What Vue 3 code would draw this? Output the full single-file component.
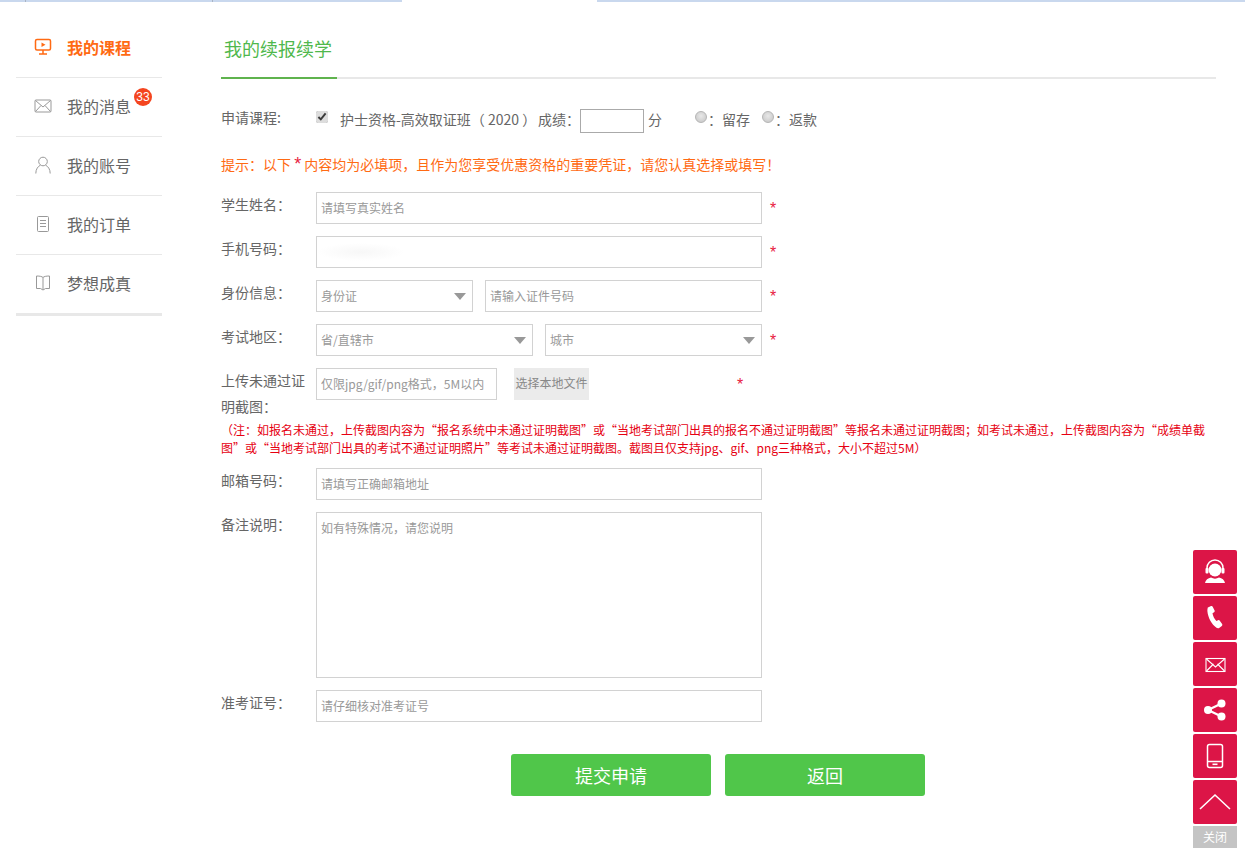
<script setup>
const menu = [
  { key: 'course', label: '我的课程', active: true },
  { key: 'msg', label: '我的消息', badge: 33 },
  { key: 'user', label: '我的账号' },
  { key: 'order', label: '我的订单' },
  { key: 'book', label: '梦想成真' }
]
const floats = ['service', 'phone', 'mail', 'share', 'mobile', 'up']
</script>

<template>
  <div class="page">
    <div class="topstrip">
      <div class="strip-seg seg-a"></div>
      <div class="strip-seg seg-a2"></div>
      <div class="strip-seg seg-a3"></div>
      <div class="strip-gap"></div>
      <div class="strip-seg seg-b"></div>
    </div>
    <div class="layout">
      <aside class="side">
        <div v-for="m in menu" :key="m.key" class="side-item" :class="{ active: m.active }">
          <svg class="side-icon" viewBox="0 0 18 18" fill="none" stroke="currentColor" stroke-width="1">
            <template v-if="m.key === 'course'">
              <rect x="1.5" y="1.5" width="15" height="10.5" rx="1.5" stroke-width="1.5" />
              <path d="M7.5 4.5l4 2.2-4 2.2z" fill="currentColor" stroke="none" />
              <path d="M9 12v4M5 16h8" stroke-width="1.5" />
            </template>
            <template v-else-if="m.key === 'msg'">
              <rect x="1" y="3" width="16" height="12" rx="1" />
              <path d="M1.500 3.500L9 10l7.500-6.500M1.500 14.500L7 8.500M16.500 14.500L11 8.500" />
            </template>
            <template v-else-if="m.key === 'user'">
              <circle cx="9" cy="5.500" r="4.300" />
              <path d="M1.800 17.500c0-4.500 2.200-7 4.400-8.200M16.200 17.500c0-4.500-2.200-7-4.400-8.200" />
            </template>
            <template v-else-if="m.key === 'order'">
              <rect x="3.500" y="1.500" width="11" height="15" rx="1" />
              <path d="M6 5.500h6M6 8.500h6M6 11.500h6" />
            </template>
            <template v-else>
              <path d="M9 3.500C8 2.500 6 2 2.500 2v12.500H6.500L9 16l2.500-1.500h4V2C12 2 10 2.500 9 3.500zM9 3.500V15.500" />
            </template>
          </svg>
          <span class="side-label">{{ m.label }}</span>
          <span v-if="m.badge" class="badge">{{ m.badge }}</span>
        </div>
      </aside>

      <main class="main">
        <div class="tabbar"><h2 class="tab">我的续报续学</h2></div>

        <div class="course-row">
          <span class="course-label">申请课程:</span>
          <input class="check" type="checkbox" checked />
          <span class="course-name">护士资格-高效取证班（ 2020 ）</span>
          <span class="score-label">成绩：</span>
          <input class="score" type="text" />
          <span class="fen">分</span>
          <input class="radio radio-first" type="radio" name="a" />
          <span class="radio-text">：留存</span>
          <input class="radio" type="radio" name="a" />
          <span class="radio-text">：返款</span>
        </div>

        <p class="hint">提示：以下 <span class="hint-star">*</span> 内容均为必填项，且作为您享受优惠资格的重要凭证，请您认真选择或填写！</p>

        <div class="row">
          <label class="lbl">学生姓名：</label>
          <input class="field wide" placeholder="请填写真实姓名" />
          <span class="star">*</span>
        </div>
        <div class="row">
          <label class="lbl">手机号码：</label>
          <input class="field wide phone" />
          <span class="star">*</span>
        </div>
        <div class="row">
          <label class="lbl">身份信息：</label>
          <div class="field select id-type"><span>身份证</span><i class="caret"></i></div>
          <input class="field id-no" placeholder="请输入证件号码" />
          <span class="star">*</span>
        </div>
        <div class="row">
          <label class="lbl">考试地区：</label>
          <div class="field select region"><span>省/直辖市</span><i class="caret"></i></div>
          <div class="field select city"><span>城市</span><i class="caret"></i></div>
          <span class="star">*</span>
        </div>
        <div class="row upload-row">
          <label class="lbl upload-lbl">上传未通过证明截图：</label>
          <input class="field upload" placeholder="仅限jpg/gif/png格式，5M以内" />
          <span class="pick">选择本地文件</span>
          <span class="star upload-star">*</span>
        </div>
        <p class="note">（注：如报名未通过，上传截图内容为“报名系统中未通过证明截图”或“当地考试部门出具的报名不通过证明截图”等报名未通过证明截图；如考试未通过，上传截图内容为“成绩单截图”或“当地考试部门出具的考试不通过证明照片”等考试未通过证明截图。截图且仅支持jpg、gif、png三种格式，大小不超过5M）</p>
        <div class="row">
          <label class="lbl">邮箱号码：</label>
          <input class="field wide" placeholder="请填写正确邮箱地址" />
        </div>
        <div class="row">
          <label class="lbl">备注说明：</label>
          <textarea class="field wide area" placeholder="如有特殊情况，请您说明"></textarea>
        </div>
        <div class="row">
          <label class="lbl">准考证号：</label>
          <input class="field wide" placeholder="请仔细核对准考证号" />
        </div>
        <div class="actions">
          <button class="btn" type="button">提交申请</button>
          <button class="btn" type="button">返回</button>
        </div>
      </main>
    </div>

    <div class="float-bar">
      <div v-for="f in floats" :key="f" class="float-btn">
        <svg viewBox="0 0 44 44" width="44" height="44" fill="#fff">
          <template v-if="f === 'service'">
            <circle cx="22" cy="20" r="6.500" />
            <path d="M14 21v-3a8 8 0 0 1 16 0v3" fill="none" stroke="#fff" stroke-width="1.500" />
            <rect x="12.500" y="18" width="3" height="5.500" rx="1" />
            <rect x="28.500" y="18" width="3" height="5.500" rx="1" />
            <path d="M12 33c.5-3 3-5 6-5.500 2.500 1.500 5.500 1.500 8 0 3 .5 5.500 2.500 6 5.500z" />
          </template>
          <path v-else-if="f === 'phone'" d="M15 11.500l3-1.500c.8-.3 1.400 0 1.700.7l1.900 3.800c.3.700.1 1.300-.5 1.700l-1.600 1c.4 2.800 1.900 5.700 3.900 7.800l1.700-.8c.7-.3 1.300-.1 1.700.5l2.300 3.400c.4.700.3 1.300-.3 1.800l-2.300 1.800c-1 .7-2.100.7-3 .1-4.800-3.300-8.500-10-9.100-16.500-.1-1.500.2-3.800.9-4.700z" />
          <g v-else-if="f === 'mail'" fill="none" stroke="#fff" stroke-width="1.100">
            <rect x="13" y="16.500" width="19" height="13" />
            <path d="M13.500 17L22.500 25l9-8M13.500 29l7-7M31.500 29l-7-7" />
          </g>
          <g v-else-if="f === 'share'">
            <circle cx="28.500" cy="15.500" r="4" />
            <circle cx="15" cy="22" r="4" />
            <circle cx="28.500" cy="28.500" r="4" />
            <path d="M15 22l13.500-6.500M15 22l13.500 6.500" stroke="#fff" stroke-width="2.200" fill="none" />
          </g>
          <g v-else-if="f === 'mobile'">
            <rect x="14.500" y="10.500" width="15" height="23" rx="2" fill="none" stroke="#fff" stroke-width="1.500" />
            <path d="M14.500 27.500h15" stroke="#fff" stroke-width="1.500" />
            <rect x="19.500" y="29.500" width="5" height="1.600" />
          </g>
          <path v-else d="M7 29L22 15l15 14" fill="none" stroke="#fff" stroke-width="1.600" />
        </svg>
      </div>
      <div class="float-close">关闭</div>
    </div>
  </div>
</template>

<style scoped>
.page {
  position: relative;
  width: 1245px;
  height: 852px;
  overflow: hidden;
  background: #fff;
  font-family: "Noto Sans CJK SC", "Liberation Sans", sans-serif;
  font-size: 14px;
  color: #666;
}
.topstrip { display: flex; height: 2px; }
.strip-seg { background: #c9d8ee; box-sizing: border-box; }
.seg-a { width: 26px; border-right: 1px solid #a9b4c4; }
.seg-a2 { width: 187px; border-right: 1px solid #a9b4c4; }
.seg-a3 { width: 189px; }
.strip-gap { width: 195px; }
.seg-b { flex: 1; }
.layout { display: flex; padding-left: 16px; }
.side { width: 146px; height: 314px; padding-top: 16px; border-bottom: 3px solid #e8e8e8; box-sizing: border-box; }
.side-item {
  position: relative;
  display: flex;
  align-items: center;
  height: 59px;
  padding: 0 0 2px 18px;
  border-bottom: 1px solid #e8e8e8;
  box-sizing: border-box;
  font-size: 16px;
  color: #666;
}
.side-item:first-child { height: 60px; }
.side-item:last-child { border-bottom: 0; padding-bottom: 3px; }
.side-item.active { color: #ff6a13; font-weight: 700; }
.side-icon { width: 18px; height: 18px; color: #999; margin-right: 15px; flex: none; }
.active .side-icon { color: #ff6a13; }
.side-label { line-height: 20px; }
.badge {
  position: absolute;
  left: 118px;
  top: 10px;
  width: 18px;
  height: 18px;
  border-radius: 50%;
  background: #f4451f;
  color: #fff;
  font-size: 12px;
  font-family: "Liberation Sans", sans-serif;
  line-height: 18px;
  text-align: center;
}
.main { width: 995px; margin-left: 59px; }
.tabbar { height: 75px; border-bottom: 2px solid #e8e8e8; }
.tab {
  display: block;
  box-sizing: content-box;
  width: 116px;
  height: 75px;
  margin: 0;
  border-bottom: 2px solid #5fb34e;
  font-size: 18px;
  font-weight: 400;
  color: #4fb84c;
  line-height: 92px;
  text-indent: 3px;
}
.course-row { display: flex; align-items: center; height: 32px; margin-top: 26px; color: #666; }
.course-label { width: 95px; margin-top: -8px; }
.check {
  width: 12px;
  height: 12px;
  margin: -8px 12px 0 0;
  accent-color: #ddd;
}
.course-name { width: 198px; white-space: pre; margin-top: -4px; }
.score-label { width: 42px; white-space: nowrap; margin-top: -4px; }
.score { width: 64px; height: 24px; padding: 0; border: 1px solid #aaa; box-sizing: border-box; outline: 0; }
.fen { margin-left: 4px; width: 33px; margin-top: -4px; }
.radio {
  appearance: none;
  width: 12px;
  height: 12px;
  margin: -8px 1px 0 0;
  border: 1px solid #b5b5b5;
  border-radius: 50%;
  background: radial-gradient(circle at 50% 40%, #e8e8e8, #c4c4c4);
  box-sizing: border-box;
}
.radio-first { margin-left: 14px; }
.radio-text { width: 54px; white-space: nowrap; margin-top: -4px; }
.hint { margin: 17px 0 0; height: 20px; line-height: 20px; color: #ff6a13; }
.hint-star { color: #e8223e; font-size: 18px; font-family: "Liberation Sans", sans-serif; }
.row { display: flex; gap: 12px; margin-top: 12px; align-items: flex-start; }
.hint + .row { margin-top: 18px; }
.lbl { width: 83px; flex: none; line-height: 24px; color: #666; }
.field {
  height: 32px;
  border: 1px solid #d2d2d2;
  box-sizing: border-box;
  padding: 0 4px 2px;
  font: inherit;
  font-size: 12px;
  color: #999;
  background: #fff;
  outline: 0;
  flex: none;
}
.field::placeholder { color: #999; opacity: 1; }
.wide { width: 446px; }
.phone { background: radial-gradient(ellipse 44px 9px at 44px 15px, #f7f7f7, #fff); }
.select { display: flex; align-items: center; justify-content: space-between; padding-right: 6px; }
.caret { width: 0; height: 0; border: 6px solid transparent; border-top: 7px solid #999; border-bottom: 0; margin-top: 2px; }
.id-type { width: 157px; }
.id-no { width: 277px; }
.region { width: 217px; }
.city { width: 217px; }
.star {
  color: #e8223e;
  font-family: "Liberation Sans", sans-serif;
  font-size: 16px;
  line-height: 30px;
  margin: 2px 0 0 -4px;
  width: 10px;
}
.upload-row { height: 32px; }
.upload-lbl { width: 84px; margin: -1px -1px 0 0; height: 56px; line-height: 26px; }
.upload { width: 181px; }
.pick { width: 75px; height: 32px; line-height: 30px; background: #ebebeb; text-align: center; font-size: 12px; color: #888; margin-left: 5px; margin-right: 145px; flex: none; }
.upload-star { margin-left: -9px; }
.note {
  margin: 21px 0 0;
  width: 990px;
  font-size: 12px;
  line-height: 18px;
  color: #e60012;
}
.note + .row { margin-top: 11px; }
.area { height: 166px; padding-top: 6px; resize: none; display: block; }
.actions { display: flex; justify-content: flex-start; gap: 14px; margin: 32px 0 0 290px; }
.btn {
  width: 200px;
  height: 42px;
  border: 0;
  border-radius: 3px;
  background: #50c64a;
  color: #fff;
  font: inherit;
  font-size: 18px;
}
.float-bar {
  position: absolute;
  left: 1193px;
  top: 550px;
  width: 44px;
  display: flex;
  flex-direction: column;
  gap: 2px;
}
.float-btn { width: 44px; height: 44px; background: #dc1547; border-radius: 2px; }
.float-btn svg { display: block; }
.float-close { height: 22px; background: #c4c4c4; color: #fff; font-size: 12px; line-height: 22px; text-align: center; }
</style>
